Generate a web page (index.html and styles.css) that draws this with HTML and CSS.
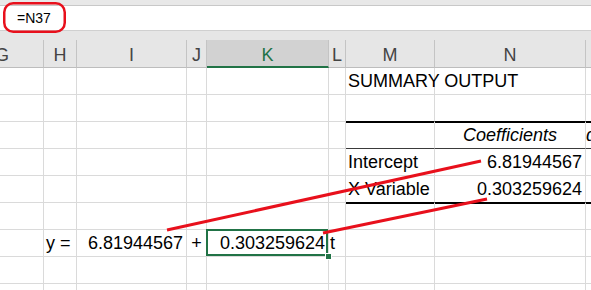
FILE: index.html
```html
<!DOCTYPE html>
<html>
<head>
<meta charset="utf-8">
<link rel="stylesheet" href="styles.css">
</head>
<body>
<div class="sheet">
  <div class="strip"></div>
  <div class="fbar"><span class="ftext">=N37</span></div>
  <div class="band"></div>
  <div class="grid">
    <div class="hd">G</div><div class="hd">H</div><div class="hd">I</div><div class="hd">J</div><div class="hd sel">K</div><div class="hd">L</div><div class="hd">M</div><div class="hd">N</div><div class="hd">O</div>

    <div class="c"></div><div class="c"></div><div class="c"></div><div class="c"></div><div class="c"></div><div class="c"></div><div class="c l">SUMMARY OUTPUT</div><div class="c"></div><div class="c"></div>

    <div class="c"></div><div class="c"></div><div class="c"></div><div class="c"></div><div class="c"></div><div class="c"></div><div class="c bb"></div><div class="c bb"></div><div class="c bb"></div>

    <div class="c"></div><div class="c"></div><div class="c"></div><div class="c"></div><div class="c"></div><div class="c"></div><div class="c tb"></div><div class="c tb ctr it">Coefficients</div><div class="c tb it cut">d</div>

    <div class="c"></div><div class="c"></div><div class="c"></div><div class="c"></div><div class="c"></div><div class="c"></div><div class="c l">Intercept</div><div class="c r">6.81944567</div><div class="c"></div>

    <div class="c"></div><div class="c"></div><div class="c"></div><div class="c"></div><div class="c"></div><div class="c"></div><div class="c l bb">X Variable</div><div class="c r bb">0.303259624</div><div class="c bb"></div>

    <div class="c"></div><div class="c"></div><div class="c"></div><div class="c"></div><div class="c"></div><div class="c"></div><div class="c"></div><div class="c"></div><div class="c"></div>

    <div class="c"></div><div class="c l">y =</div><div class="c r">6.81944567</div><div class="c ctr">+</div><div class="c r active">0.303259624</div><div class="c l tl">t</div><div class="c"></div><div class="c"></div><div class="c"></div>

    <div class="c"></div><div class="c"></div><div class="c"></div><div class="c"></div><div class="c"></div><div class="c"></div><div class="c"></div><div class="c"></div><div class="c"></div>

    <div class="c"></div><div class="c"></div><div class="c"></div><div class="c"></div><div class="c"></div><div class="c"></div><div class="c"></div><div class="c"></div><div class="c"></div>
  </div>
  <svg class="annot" width="591" height="290" viewBox="0 0 591 290">
    <rect x="4.25" y="3.25" width="60.5" height="28.5" rx="9" ry="9" fill="none" stroke="#e8101c" stroke-width="2.5"/>
    <line x1="167" y1="230" x2="481" y2="161" stroke="#e8101c" stroke-width="3"/>
    <line x1="323" y1="233" x2="487" y2="199" stroke="#e8101c" stroke-width="3"/>
  </svg>
</div>
</body>
</html>
```
FILE: styles.css
```css
html, body {
  margin: 0;
  padding: 0;
  background: #fff;
}
.sheet {
  position: relative;
  width: 591px;
  height: 290px;
  overflow: hidden;
  font-family: "Liberation Sans", Arial, sans-serif;
  color: #000;
  background: #fff;
}
.strip {
  height: 5px;
  background: #e8e8e8;
  border-bottom: 1px solid #c8c8c8;
}
.fbar {
  height: 24px;
  background: #fff;
  border-bottom: 1px solid #d0d0d0;
  line-height: 24px;
  font-size: 14px;
  padding-left: 17px;
}
.band {
  height: 9px;
  background: #e6e6e6;
}
.grid {
  display: grid;
  grid-template-columns: 83px 33px 110px 20px 122px 17px 89px 151px 60px;
  grid-template-rows: 28px repeat(9, 27px);
  margin-left: -39px;
  font-size: 18px;
}
.hd {
  box-sizing: border-box;
  background: #e6e6e6;
  border-right: 1px solid #c4c4c4;
  border-bottom: 1px solid #bdbdbd;
  color: #444;
  text-align: center;
  padding-top: 3px;
  line-height: 24px;
}
.hd.sel {
  background: #d2d2d2;
  color: #217346;
  border-bottom: 2px solid #217346;
}
.c {
  box-sizing: border-box;
  border-right: 1px solid #dadada;
  border-bottom: 1px solid #dadada;
  line-height: 26px;
  white-space: nowrap;
  position: relative;
}
.l { padding-left: 2px; text-align: left; }
.r { padding-right: 3px; text-align: right; }
.ctr { text-align: center; }
.it { font-style: italic; }
.tl { padding-left: 1px; }
.bb {
  border-bottom-color: #000;
  box-shadow: 0 1px 0 #000;
}
.tb {
  border-bottom-color: #3a3a3a;
}
.cut {
  padding-left: 0;
  overflow: hidden;
}
.active::after {
  content: "";
  position: absolute;
  left: -1px;
  top: -1px;
  right: 0;
  bottom: 0;
  border: 2px solid #217346;
}
.active::before {
  content: "";
  position: absolute;
  left: 119px;
  top: 24px;
  width: 5px;
  height: 5px;
  background: #217346;
  box-shadow: 0 0 0 1px #fff;
  z-index: 2;
}
.annot {
  position: absolute;
  left: 0;
  top: 0;
  pointer-events: none;
}
```
